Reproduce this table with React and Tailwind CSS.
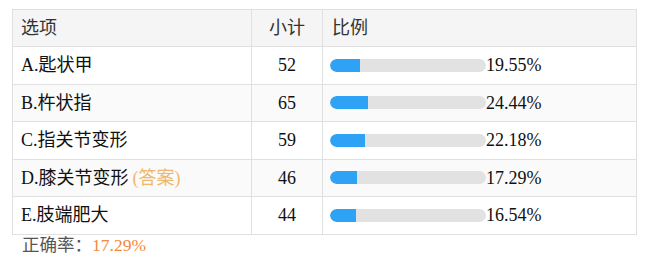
import React from "react";

const rows = [
  { label: "A.匙状甲", count: 52, pct: 19.55 },
  { label: "B.杵状指", count: 65, pct: 24.44 },
  { label: "C.指关节变形", count: 59, pct: 22.18 },
  { label: "D.膝关节变形", count: 46, pct: 17.29, answer: true },
  { label: "E.肢端肥大", count: 44, pct: 16.54 },
];

const font = { fontFamily: '"Liberation Serif", "Noto Sans CJK SC", serif' };

export default function App() {
  return (
    <div className="w-[653px] h-[262px] bg-white text-[#111] text-[18px] leading-none" style={font}>
      <div className="pt-[9px] pl-[12px]">
        <div className="w-[625px] border border-[#e0e0e0] border-b-0">
          <div className="flex h-[37px] bg-[#f5f5f5] border-b border-[#e0e0e0] items-center">
            <div className="w-[239px] h-full border-r border-[#e0e0e0] pl-[8px] flex items-center text-[#333]">选项</div>
            <div className="w-[71px] h-full border-r border-[#e0e0e0] flex items-center justify-center text-[#333]">小计</div>
            <div className="flex-1 h-full pl-[9px] flex items-center text-[#333]">比例</div>
          </div>
          {rows.map((r, i) => (
            <div
              key={r.label}
              className={`flex h-[37.5px] border-b border-[#e0e0e0] items-center ${i % 2 === 1 ? "bg-[#fafafa]" : "bg-white"}`}
            >
              <div className="w-[239px] h-full border-r border-[#e0e0e0] pl-[8px] flex items-center">
                <span>{r.label}</span>
                {r.answer && <span className="ml-[4px] text-[#edb86e]">(答案)</span>}
              </div>
              <div className="w-[71px] h-full border-r border-[#e0e0e0] flex items-center justify-center">{r.count}</div>
              <div className="flex-1 h-full pl-[7px] flex items-center">
                <div className="w-[156px] h-[13px] rounded-full bg-[#e2e2e2] overflow-hidden">
                  <div className="h-full bg-[#2ea2f4] rounded-l-full" style={{ width: `${r.pct}%` }} />
                </div>
                <span>{r.pct.toFixed(2)}%</span>
              </div>
            </div>
          ))}
        </div>
      </div>
      <div className="pl-[22px] flex items-center h-[22px] text-[17.5px]">
        <span className="text-[#555]">正确率：</span>
        <span className="text-[#f5883a]">17.29%</span>
      </div>
    </div>
  );
}
